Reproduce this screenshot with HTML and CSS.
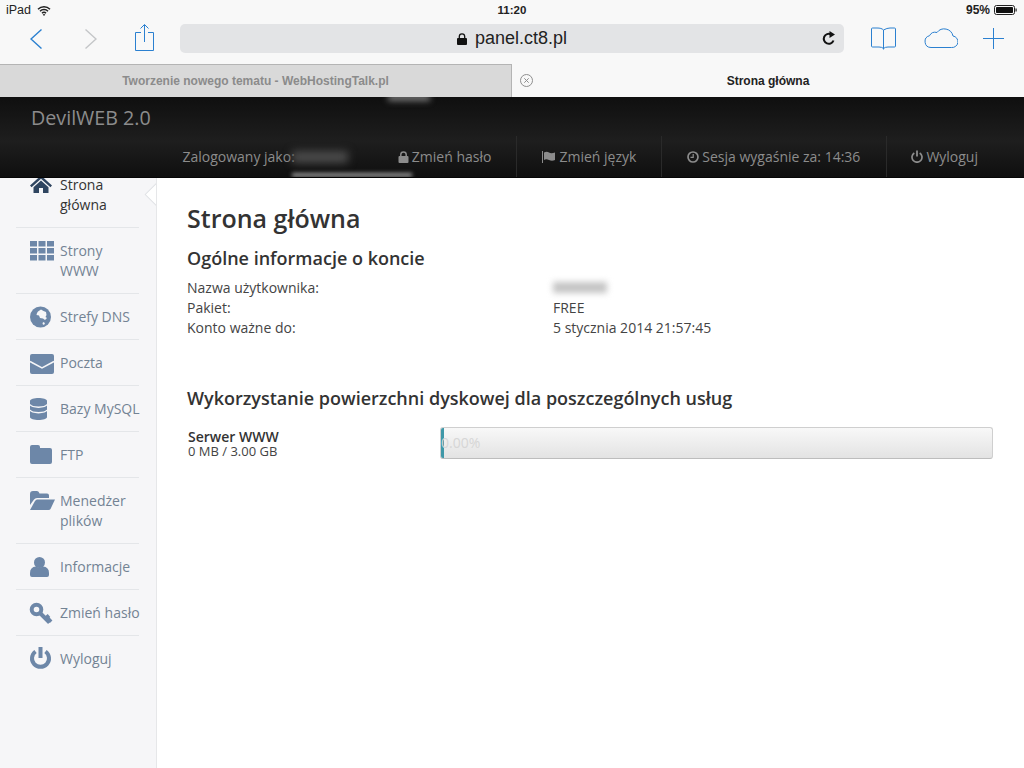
FILE: index.html
```html
<!DOCTYPE html>
<html>
<head>
    <title>Strona główna - DevilWEB 2.0</title>
    <meta charset="utf-8">
    <link rel="stylesheet" href="styles.css">
</head>
<body>
    <div class="status-bar">
        <div class="status-left">
            <span>iPad</span>
            <svg class="wifi" width="14" height="11" viewBox="0 0 14 11"><path d="M1 4.2a8.5 8.5 0 0 1 12 0M3 6.3a5.6 5.6 0 0 1 8 0M5 8.2a2.8 2.8 0 0 1 4 0" fill="none" stroke="#222" stroke-width="1.5"/><path d="M7 11 5.7 9.5a1.9 1.9 0 0 1 2.6 0z" fill="#222"/></svg>
        </div>
        <div class="status-time">11:20</div>
        <div class="status-right">
            <span>95%</span>
            <svg width="24" height="10" viewBox="0 0 24 10"><rect x=".5" y=".5" width="20" height="9" rx="2" fill="none" stroke="#222"/><rect x="2" y="2" width="17" height="6" rx=".8" fill="#111"/><rect x="21.5" y="3.5" width="1.2" height="3" fill="#222"/></svg>
        </div>
    </div>

    <div class="toolbar">
        <svg class="tool-back" width="12" height="20" viewBox="0 0 12 20"><path d="M11.5 .5 1 10l10.5 9.500" fill="none" stroke="#2b80d0" stroke-width="1.4"/></svg>
        <svg class="tool-forward" width="12" height="20" viewBox="0 0 12 20"><path d="M.5 .5 11 10 .5 19.500" fill="none" stroke="#c4c6c8" stroke-width="1.4"/></svg>
        <svg class="tool-share" width="19" height="27" viewBox="0 0 19 27"><path d="M6 8.500H.5v18h18v-18H13M9.500 18V.8M5.500 4.500l4-4 4 4" fill="none" stroke="#2b80d0"/></svg>
        <div class="url-bar">
            <svg width="10" height="12" viewBox="0 0 10 12"><path d="M2.300 6V3.600a2.700 2.700 0 0 1 5.400 0V6" fill="none" stroke="#111" stroke-width="1.3"/><rect y="5" width="10" height="7" rx="1" fill="#111"/></svg>
            <span class="url-text">panel.ct8.pl</span>
            <svg class="reload" width="14" height="15" viewBox="0 0 14 15"><path d="M11.500 9.500A5 5 0 1 1 9 3.300" fill="none" stroke="#111" stroke-width="2"/><path d="M7.500 0 13 3.500 7.500 7z" fill="#111"/></svg>
        </div>
        <svg class="tool-book" width="25" height="23" viewBox="0 0 25 23"><path d="M12.500 3C11 1.500 9 1 6 1H1.500Q.5 1 .5 2v17q0 1 1 1H8q3 0 4.500 1.500Q14 20 17 20h6.500q1 0 1-1V2q0-1-1-1H19q-3 0-6.500 2zm0 0v19.500" fill="none" stroke="#2b80d0"/></svg>
        <svg class="tool-cloud" width="34" height="21" viewBox="0 0 34 21"><path d="M7 20.500A6 6 0 0 1 5.500 8.700 6.500 6.500 0 0 1 13 5.500 9 9 0 0 1 29 9a5.800 5.800 0 0 1-1.500 11.500z" fill="none" stroke="#2b80d0"/></svg>
        <svg class="tool-plus" width="21" height="21" viewBox="0 0 21 21"><path d="M10.500 0v21M0 10.500h21" stroke="#2b80d0"/></svg>
    </div>

    <div class="tabs">
        <div class="tab tab-inactive">Tworzenie nowego tematu - WebHostingTalk.pl</div>
        <div class="tab tab-active">
            <svg class="tab-close" width="13" height="13" viewBox="0 0 13 13"><circle cx="6.500" cy="6.500" r="6" fill="none" stroke="#8e8e8e"/><path d="M4.300 4.300l4.400 4.400M8.700 4.300l-4.400 4.400" stroke="#8e8e8e"/></svg>
            Strona główna
        </div>
    </div>

    <div class="page">
        <header class="header">
            <div class="brand">DevilWEB 2.0</div>
            <nav class="topnav">
                <div class="topnav-item topnav-user">Zalogowany jako:<span class="user-blur"></span></div>
                <a class="topnav-item topnav-pass">
                    <svg width="11" height="12" viewBox="0 0 11 12"><path d="M2.800 6V3.600a2.700 2.700 0 0 1 5.400 0V6" fill="none" stroke="#8c8c8c" stroke-width="1.500"/><rect x=".5" y="5" width="10" height="7" rx="1" fill="#8c8c8c"/></svg>
                    Zmień hasło
                </a>
                <a class="topnav-item topnav-lang">
                    <svg width="14" height="12" viewBox="0 0 14 12"><path d="M.5 0v12" stroke="#8c8c8c"/><path d="M2 1.500q3-1.500 5 0t6 0V9q-3 1.500-6 0t-5 0z" fill="#8c8c8c"/></svg>
                    Zmień język
                </a>
                <a class="topnav-item">
                    <svg width="12" height="12" viewBox="0 0 12 12"><circle cx="6" cy="6" r="5" fill="none" stroke="#8c8c8c" stroke-width="1.700"/><path d="M6.200 3v3.300H3.500" fill="none" stroke="#8c8c8c" stroke-width="1.200"/></svg>
                    Sesja wygaśnie za: 14:36
                </a>
                <a class="topnav-item topnav-last">
                    <svg width="12" height="13" viewBox="0 0 12 13"><path d="M3.300 3a5 5 0 1 0 5.400 0" fill="none" stroke="#8c8c8c" stroke-width="1.700"/><path d="M6 .5v6" stroke="#8c8c8c" stroke-width="1.800"/></svg>
                    Wyloguj
                </a>
            </nav>
            <div class="smudge smudge-top"></div>
            <div class="smudge smudge-bottom"></div>
        </header>

        <div class="layout">
            <aside class="sidebar">
                <ul class="menu">
                    <li class="menu-item active">
                        <svg class="menu-icon" width="26" height="20" viewBox="0 0 26 20"><path d="M11 .5 0 10.500l1.600 1.800L11 3.800l9.400 8.500 1.600-1.800z"/><path d="M3.500 12.300 11 5.600l7.500 6.700V18H13v-5H9v5H3.500z"/></svg>
                        <span>Strona główna</span>
                    </li>
                    <li class="menu-item">
                        <svg class="menu-icon" width="26" height="20" viewBox="0 0 26 20"><path d="M0 0h7v5.500H0zM8.500 0h7v5.500h-7zM17 0h7v5.500h-7zM0 7h7v5.500H0zM8.500 7h7v5.500h-7zM17 7h7v5.500h-7zM0 14h7v5.500H0zM8.500 14h7v5.500h-7zM17 14h7v5.500h-7z"/></svg>
                        <span>Strony WWW</span>
                    </li>
                    <li class="menu-item">
                        <svg class="menu-icon" width="26" height="20" viewBox="0 0 26 20"><circle cx="10.500" cy="10" r="10.500"/><path class="cut" d="M8 4.500l3-2 2.500 1.500 2.500 1 .5 3-1 2 1.500 1-2 2-2-1.500-3-.5-1-2.500-2.500-.5.500-2zM13 15l2 1-1 2-1.500-1z"/></svg>
                        <span>Strefy DNS</span>
                    </li>
                    <li class="menu-item">
                        <svg class="menu-icon" width="26" height="20" viewBox="0 0 26 20"><rect y="1" width="24" height="20" rx="2"/><path class="cut-line" d="M0 8.500l12 6.500 12-6.500"/></svg>
                        <span>Poczta</span>
                    </li>
                    <li class="menu-item">
                        <svg class="menu-icon" width="26" height="20" viewBox="0 0 26 20"><path d="M0 2c0-4 17-4 17 0v16c0 4-17 4-17 0z"/><path class="cut-line" d="M0 5.500c2 3.500 15 3.500 17 0M0 11c2 3.500 15 3.500 17 0"/></svg>
                        <span>Bazy MySQL</span>
                    </li>
                    <li class="menu-item">
                        <svg class="menu-icon" width="26" height="20" viewBox="0 0 26 20"><path d="M2 0h6q2 0 2 2v1h10q2 0 2 2v12q0 2-2 2H2q-2 0-2-2V2q0-2 2-2z"/></svg>
                        <span>FTP</span>
                    </li>
                    <li class="menu-item">
                        <svg class="menu-icon" width="26" height="20" viewBox="0 0 26 20"><path d="M0 3q0-3 3-3h4q2 0 2.500 2.500H17q2 0 2 2V7H7q-2 0-3 1.500L0 14z"/><path d="M7 8.500h18l-4.500 9.500q-.5 1-2 1H0l5-9q1-1.500 2-1.500z"/></svg>
                        <span>Menedżer plików</span>
                    </li>
                    <li class="menu-item">
                        <svg class="menu-icon" width="26" height="20" viewBox="0 0 26 20"><circle cx="9.500" cy="5.500" r="5.500"/><path d="M0 16q0-6 6-6.500 3.500 2 7 0 6 .5 6 6.500v2q0 2-2 2H2q-2 0-2-2z"/></svg>
                        <span>Informacje</span>
                    </li>
                    <li class="menu-item">
                        <svg class="menu-icon" width="26" height="20" viewBox="0 0 26 20"><circle class="key-line" cx="6.500" cy="6.500" r="4.800"/><path class="key-line" d="M10 10l9.500 9.500M15.500 15.500l3.500-3M18.500 18.500l2.500-2.500"/></svg>
                        <span>Zmień hasło</span>
                    </li>
                    <li class="menu-item">
                        <svg class="menu-icon" width="26" height="20" viewBox="0 0 26 20"><path class="key-line" d="M5.500 2.500a8.500 8.500 0 1 0 10 0"/><path class="key-line" d="M10.500 -2v11"/></svg>
                        <span>Wyloguj</span>
                    </li>
                </ul>
                <div class="menu-arrow"></div>
            </aside>

            <main class="content">
                <h1>Strona główna</h1>
                <h2>Ogólne informacje o koncie</h2>
                <div class="info-row"><span class="info-label">Nazwa użytkownika:</span><span class="info-blur"></span></div>
                <div class="info-row"><span class="info-label">Pakiet:</span><span>FREE</span></div>
                <div class="info-row"><span class="info-label">Konto ważne do:</span><span>5 stycznia 2014 21:57:45</span></div>

                <h2 class="usage-title">Wykorzystanie powierzchni dyskowej dla poszczególnych usług</h2>
                <div class="usage-row">
                    <div class="usage-label">
                        <strong>Serwer WWW</strong>
                        <span>0 MB / 3.00 GB</span>
                    </div>
                    <div class="progress">
                        <div class="progress-bar"></div>
                        <span class="progress-text">0.00%</span>
                    </div>
                </div>
            </main>
        </div>
    </div>
</body>
</html>
```

FILE: styles.css
```css
* {
    box-sizing: border-box;
}

html,
body {
    height: 768px;
    overflow: hidden;
}

body {
    margin: 0;
    font-family: "Open Sans", sans-serif;
    background-color: #fff;
}

/* ios safari chrome */
.status-bar {
    display: grid;
    grid-template-columns: 1fr auto 1fr;
    align-items: center;
    height: 20px;
    padding: 0 6px;
    background-color: #f8f8f8;
    font-family: "Liberation Sans", sans-serif;
    font-size: 12.5px;
    color: #222;
}

.status-left {
    display: flex;
    align-items: center;
    gap: 6px;
}

.status-time {
    font-weight: bold;
    font-size: 11.5px;
}

.status-right {
    display: flex;
    justify-content: flex-end;
    align-items: center;
    gap: 4px;
    font-weight: bold;
    font-size: 12px;
}

.toolbar {
    display: flex;
    align-items: flex-start;
    height: 44px;
    background-color: #f8f8f8;
}

.tool-back {
    margin: 9px 0 0 30px;
}

.tool-forward {
    margin: 9px 0 0 43px;
}

.tool-share {
    margin: 4px 0 0 38px;
}

.url-bar {
    display: flex;
    justify-content: center;
    align-items: center;
    gap: 8px;
    position: relative;
    width: 664px;
    height: 29px;
    margin: 4px 0 0 26px;
    border-radius: 5px;
    background-color: #e3e4e6;
    font-family: "Liberation Sans", sans-serif;
    font-size: 18px;
    color: #222;
}

.reload {
    position: absolute;
    right: 8px;
    top: 7px;
}

.tool-book {
    margin: 7px 0 0 27px;
}

.tool-cloud {
    margin: 7px 0 0 28px;
}

.tool-plus {
    margin: 8px 0 0 25px;
}

.tabs {
    display: grid;
    grid-template-columns: 512px 512px;
    height: 33px;
    font-family: "Liberation Sans", sans-serif;
    font-size: 12px;
    font-weight: bold;
}

.tab {
    display: flex;
    justify-content: center;
    align-items: center;
    position: relative;
}

.tab-inactive {
    background-color: #d9d9d9;
    border-top: 1px solid #b4b4b4;
    border-right: 1px solid #b4b4b4;
    color: #8b8b8b;
}

.tab-active {
    background-color: #f8f8f8;
    color: #222;
}

.tab-close {
    position: absolute;
    left: 8px;
    top: 10px;
}

/* panel */
.page {
    display: flex;
    flex-direction: column;
    height: 671px;
}

.header {
    position: relative;
    flex: none;
    height: 81px;
    overflow: hidden;
    background: linear-gradient(#0f0f0f, #1e1e1e 55%, #0f0f0f);
    border-bottom: 1px solid #060606;
    color: #8c8c8c;
}

.brand {
    height: 39px;
    padding: 7px 0 0 31px;
    font-size: 19.7px;
    line-height: 28px;
}

.topnav {
    display: flex;
    justify-content: flex-end;
    height: 41px;
    padding-right: 20px;
    font-size: 14px;
}

.topnav-item {
    display: flex;
    align-items: center;
    gap: 3px;
    padding: 0 26px 0 25px;
    border-left: 1px solid #2a2a2a;
    white-space: nowrap;
}

.topnav-user {
    padding-right: 25px;
    border-left: none;
}

.topnav-pass {
    border-left: none;
    padding-right: 25px;
}

.topnav-lang {
    padding-right: 25px;
}

.topnav-last {
    padding-left: 24px;
}

.user-blur {
    width: 56px;
    height: 12px;
    margin-left: -6px;
    background-color: #4c4c4c;
    filter: blur(4px);
}

.smudge {
    position: absolute;
    background-color: #8d8d8d;
    filter: blur(3px);
}

.smudge-top {
    left: 388px;
    top: -3px;
    width: 42px;
    height: 7px;
    background-color: #777;
}

.smudge-bottom {
    left: 292px;
    top: 76px;
    width: 120px;
    height: 4px;
    background-color: #9a9a9a;
    filter: blur(2px);
}

.layout {
    display: flex;
    flex: 1;
    min-height: 0;
}

.sidebar {
    position: relative;
    flex: none;
    width: 157px;
    overflow: hidden;
    background-color: #f6f6f8;
    border-right: 1px solid #e6e7e9;
}

.menu {
    margin: -16px 0 0 16px;
    padding: 0;
    width: 123px;
    list-style: none;
}

.menu-item {
    display: flex;
    gap: 4px;
    padding: 13px 0 12px 14px;
    border-bottom: 1px solid #e4e6e9;
    font-size: 14px;
    line-height: 20px;
    color: #738394;
}

.menu-item:last-child {
    border-bottom: none;
}

.menu-item span {
    min-width: 0;
    flex: 1;
    margin-right: -1px;
    white-space: normal;
}

.menu-icon {
    flex: none;
    fill: #6d87a8;
    overflow: visible;
}

.menu-item.active {
    color: #333;
}

.menu-item.active .menu-icon {
    fill: #2f4560;
}

.cut {
    fill: #f6f6f8;
}

.cut-line {
    fill: none;
    stroke: #f6f6f8;
    stroke-width: 1.5;
}

.key-line {
    fill: none;
    stroke: #6d87a8;
    stroke-width: 4;
}

.menu-arrow {
    position: absolute;
    top: 8px;
    right: -9px;
    width: 17px;
    height: 17px;
    background-color: #fff;
    border: 1px solid #e0e2e5;
    transform: rotate(45deg);
}

.content {
    flex: 1;
    padding: 24px 31px 0 30px;
    color: #444;
    font-size: 14px;
    line-height: 20px;
}

h1 {
    margin: 0;
    font-size: 25px;
    line-height: 32px;
    font-weight: 600;
    color: #333;
}

h2 {
    margin: 12px 0 8px;
    font-size: 18px;
    line-height: 24px;
    font-weight: 600;
    color: #333;
}

.info-row {
    display: flex;
    height: 20px;
}

.info-label {
    width: 366px;
    flex: none;
}

.info-blur {
    width: 54px;
    height: 11px;
    margin-top: 4px;
    background-color: #c4c4c4;
    filter: blur(3px);
}

h2.usage-title {
    margin: 48px 0 17px;
}

.usage-row {
    display: flex;
    align-items: flex-start;
}

.usage-label {
    display: flex;
    flex-direction: column;
    flex: none;
    width: 253px;
    padding: 3px 0 0 1px;
    font-size: 13px;
    line-height: 14px;
}

.usage-label strong {
    font-weight: 600;
    font-size: 14px;
    color: #333;
}

.progress {
    position: relative;
    width: 553px;
    height: 32px;
    overflow: hidden;
    border: 1px solid #cfcfcf;
    border-bottom-color: #bdbdbd;
    border-radius: 3px;
    background: linear-gradient(#f8f8f8, #e3e3e3);
}

.progress-bar {
    position: absolute;
    left: 0;
    top: 0;
    bottom: 0;
    width: 3px;
    background-color: #3f98a8;
}

.progress-text {
    position: absolute;
    left: 0;
    top: 5px;
    font-size: 14px;
    color: #d6d6d6;
}
```
